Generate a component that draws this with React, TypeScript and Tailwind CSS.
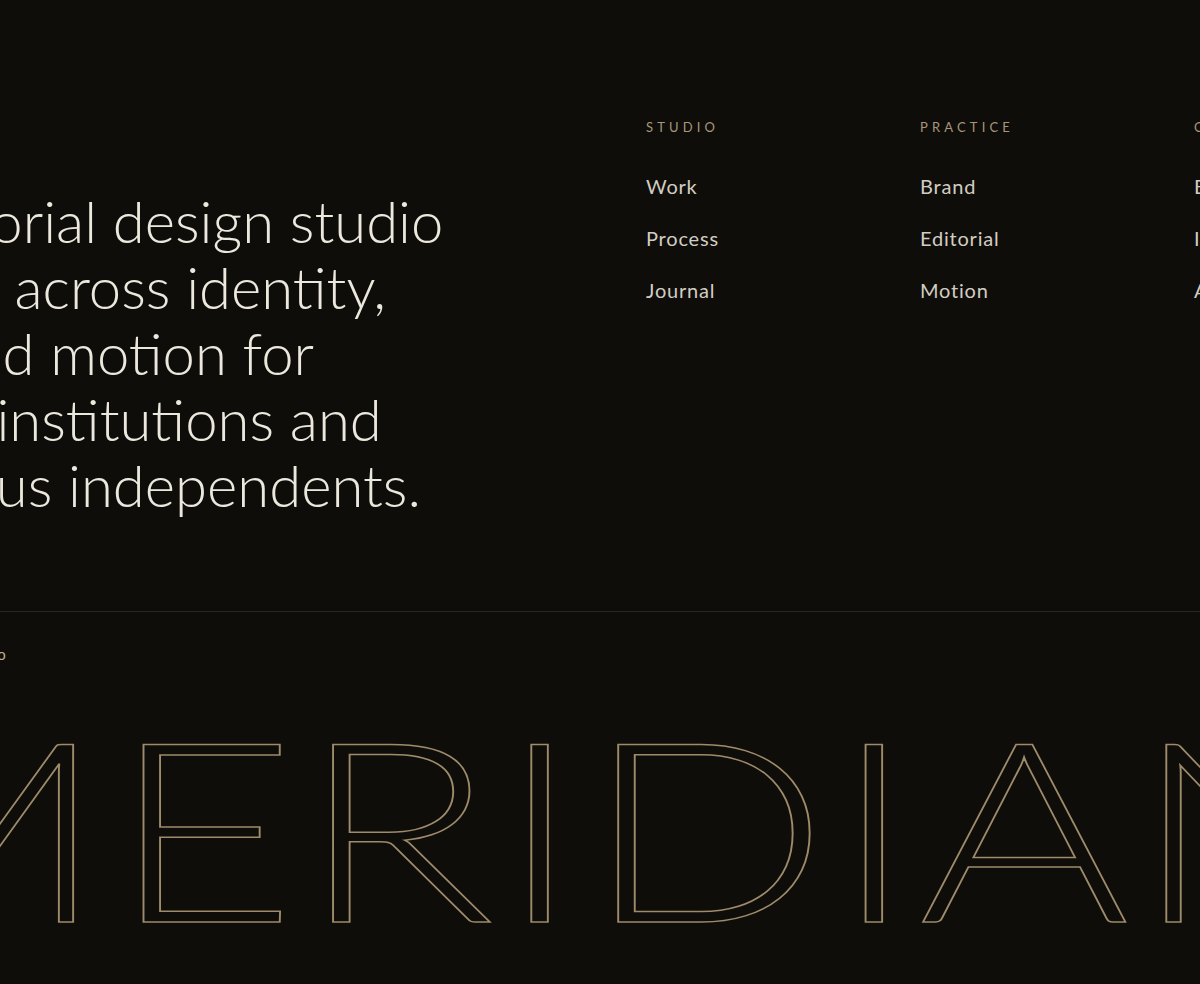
const columns = [
  { title: "Studio", links: ["Work", "Process", "Journal"] },
  { title: "Practice", links: ["Brand", "Editorial", "Motion"] },
  { title: "Connect", links: ["Behance", "Instagram", "Are.na"] },
];

export default function App() {
  return (
    <div className="min-h-screen overflow-hidden bg-[#0f0d0a] font-['Lato','Liberation_Sans',sans-serif]">
      <footer className="ml-[-185px] w-[2000px]">
        <div className="flex pt-[119px] pb-[93px]">
          <div className="w-[831px] shrink-0">
            <p className="-ml-[5px] mt-[69px] text-[58px] leading-[66px] font-light text-[#ece8dd]">
              An editorial design studio
              <br />
              <span className="tracking-[-0.025em]">working</span> across identity,
              <br />
              print and motion for
              <br />
              <span className="tracking-[-0.03em]">cultural</span> institutions and
              <br />
              ambitious independents.
            </p>
          </div>
          <nav className="grid w-[822px] shrink-0 grid-cols-3">
            {columns.map((col) => (
              <div key={col.title}>
                <h4 className="text-[13px] leading-4 uppercase tracking-[0.32em] text-[#a6977b]">
                  {col.title}
                </h4>
                <ul className="mt-[37px] flex flex-col gap-6">
                  {col.links.map((link) => (
                    <li key={link} className="text-[20px] leading-7 tracking-[0.04em] text-[#d2cdc2]">
                      {link}
                    </li>
                  ))}
                </ul>
              </div>
            ))}
          </nav>
        </div>

        <div className="border-t border-[#2a2723] pt-8">
          <p className="text-[15px] leading-5 tracking-[0.1em] text-[#bfae8e]">© 2025 Meridian Studio</p>
          <div className="mt-[35px] origin-left scale-x-[1.28] text-[251px] leading-none font-light tracking-[0.01em] whitespace-nowrap text-transparent [-webkit-text-stroke:1.5px_#9d8b6a]">
            MERIDIAN
          </div>
        </div>
      </footer>
    </div>
  );
}
